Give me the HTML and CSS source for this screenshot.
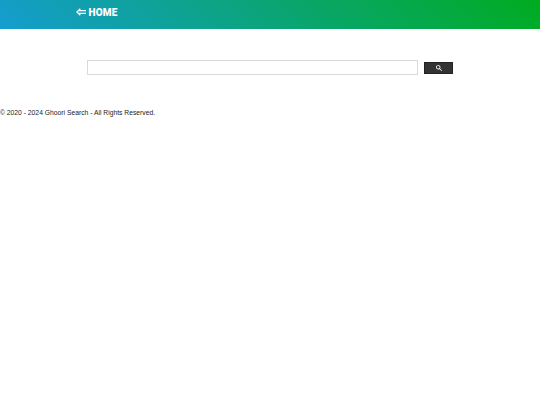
FILE: index.html
```html
<!DOCTYPE html>
<html lang="en">
<head>
  <meta charset="UTF-8">
  <title>Ghoori Search</title>
  <meta name="viewport" content="width=device-width, initial-scale=1.0">
  <link rel="stylesheet" href="styles.css">
</head>
<body>

<header class="header">
  <a class="home-link" href="#">
    <svg class="home-arrow" viewBox="0 0 11 8" aria-hidden="true">
      <path d="M4.5 0.6 L1 4 L4.5 7.4 M2.6 2.6 H10.5 M2.6 5.4 H10.5"/>
    </svg>
    <span>HOME</span>
  </a>
</header>

<form class="search" onsubmit="return false">
  <input class="search-input" type="text" name="search" aria-label="search">
  <button class="search-btn" type="submit" aria-label="search">
    <svg class="search-icon" viewBox="0 0 13 13">
      <path d="m4.8495 7.8226c0.82666 0 1.5262-0.29146 2.0985-0.87438 0.57232-0.58292 0.86378-1.2877 0.87438-2.1144 0.010599-0.82666-0.28086-1.5262-0.87438-2.0985-0.59352-0.57232-1.293-0.86378-2.0985-0.87438-0.8055-0.010599-1.5103 0.28086-2.1144 0.87438-0.60414 0.59352-0.8956 1.293-0.87438 2.0985 0.021197 0.8055 0.31266 1.5103 0.87438 2.1144 0.56172 0.60414 1.2665 0.8956 2.1144 0.87438zm4.4695 0.2115 3.681 3.6819-1.259 1.284-3.6817-3.7 0.0019784-0.69479-0.090043-0.098846c-0.87973 0.76087-1.92 1.1413-3.1207 1.1413-1.3553 0-2.5025-0.46363-3.4417-1.3909s-1.4088-2.0686-1.4088-3.4239c0-1.3553 0.4696-2.4966 1.4088-3.4239 0.9392-0.92727 2.0864-1.3969 3.4417-1.4088 1.3553-0.011889 2.4906 0.45771 3.406 1.4088 0.9154 0.95107 1.379 2.0924 1.3909 3.4239 0 1.2126-0.38043 2.2588-1.1413 3.1385l0.098834 0.090049z"/>
    </svg>
  </button>
</form>

<footer class="footer">© 2020 - 2024 Ghoori Search - All Rights Reserved.</footer>

</body>
</html>
```

FILE: styles.css
```css
* {
  box-sizing: border-box;
}
body {
  margin: 0;
  background-color: #fff;
  color: #222;
  font-family: "Liberation Sans", Arial, sans-serif;
}
.header {
  display: flex;
  align-items: flex-start;
  height: 28.5px;
  padding: 6px 0 0 76px;
  background: linear-gradient(45deg, #159dcf 0%, #00ac20 100%);
}
.home-link {
  display: flex;
  align-items: center;
  gap: 2px;
  color: #fff;
  font-family: Roboto, sans-serif;
  font-size: 10px;
  font-weight: 900;
  letter-spacing: 0.2px;
  line-height: 13px;
  text-decoration: none;
}
.home-arrow {
  width: 10.5px;
  height: 8px;
  margin-top: -1px;
  fill: none;
  stroke: #fff;
  stroke-width: 1.3;
}
.search {
  display: flex;
  align-items: center;
  gap: 6px;
  padding: 31.5px 87px 0;
}
.search-input {
  flex: 1;
  min-width: 0;
  height: 15px;
  padding: 0 4px;
  border: 1px solid #d9d9d9;
  background-color: #fff;
  font-size: 8px;
  outline: none;
}
.search-btn {
  display: flex;
  align-items: center;
  justify-content: center;
  width: 29px;
  height: 12px;
  margin-top: 1px;
  padding: 0;
  border: 1px solid #222;
  background-color: #333;
}
.search-icon {
  width: 6px;
  height: 6px;
  fill: #fff;
}
.footer {
  margin-top: 33px;
  font-size: 6.75px;
  line-height: 10px;
}
```
